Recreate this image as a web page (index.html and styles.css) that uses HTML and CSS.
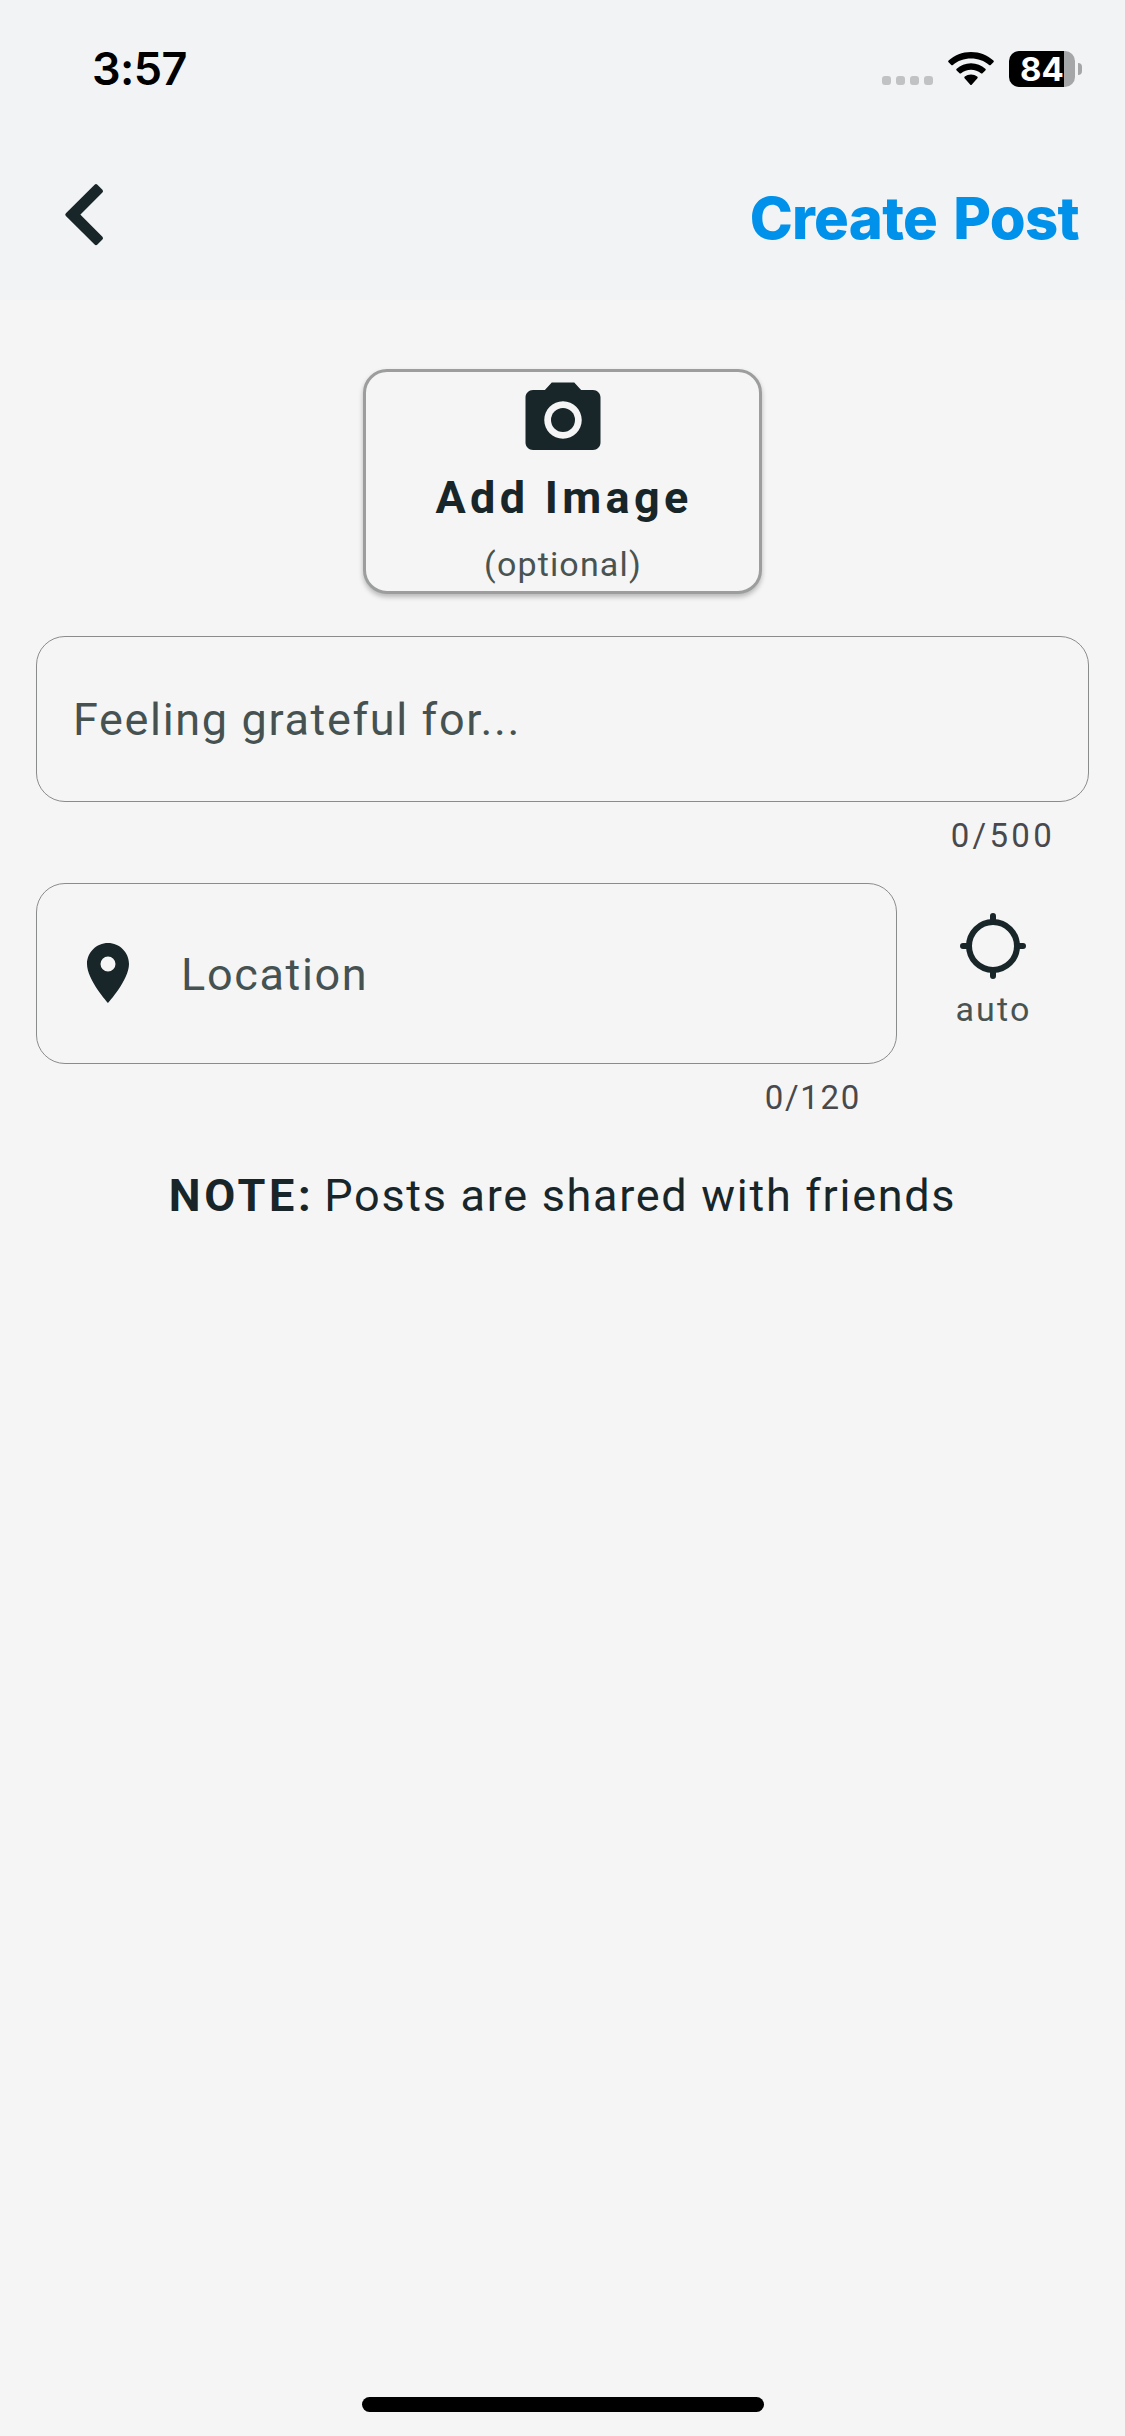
FILE: index.html
```html
<!DOCTYPE html>
<html lang="en">
<head>
<meta charset="utf-8">
<title>Create Post</title>
<link rel="stylesheet" href="styles.css">
</head>
<body>
<header class="header">
  <div class="status">
    <span class="time">3:57</span>
    <div class="indicators">
      <div class="signal"><i></i><i></i><i></i><i></i></div>
      <svg class="wifi" width="46" height="34" viewBox="0 0 46 34"><path d="M23 0C14.200 0 6.400 3.300.600 8.600a1.200 1.200 0 0 0 0 1.700l2.700 2.700a1.200 1.200 0 0 0 1.600 0C9.700 8.700 16 6.500 23 6.500s13.300 2.200 18.100 6.500a1.200 1.200 0 0 0 1.600 0l2.700-2.700a1.200 1.200 0 0 0 0-1.700C39.600 3.300 31.800 0 23 0zM23 11.300c-5.600 0-10.600 2.100-14.300 5.400a1.200 1.200 0 0 0 0 1.800l2.800 2.700a1.200 1.200 0 0 0 1.600 0c2.700-2.200 6.100-3.500 9.900-3.500s7.200 1.300 9.900 3.500a1.200 1.200 0 0 0 1.600 0l2.800-2.700a1.200 1.200 0 0 0 0-1.800C33.600 13.400 28.600 11.300 23 11.300zM23 22.500c-2.400 0-4.500.8-6.200 2.100a1.200 1.200 0 0 0 0 1.800l5.300 6.200a1.200 1.200 0 0 0 1.800 0l5.300-6.200a1.200 1.200 0 0 0 0-1.800c-1.700-1.300-3.800-2.100-6.200-2.100z"/></svg>
      <div class="battery"><span class="cell">84</span><span class="nub"></span></div>
    </div>
  </div>
  <nav class="nav">
    <svg class="back" width="40" height="64" viewBox="0 0 40 64"><path d="M3.300 31.700 32 3.200l5 5-23.400 23.500L37 55.200l-5 5z"/></svg>
    <h1 class="title">Create Post</h1>
  </nav>
</header>
<main class="form">
  <button class="add">
    <svg class="camera" viewBox="0 0 24 24"><circle cx="12" cy="12" r="3.2"/><path d="M9 2 7.170 4H4c-1.100 0-2 .9-2 2v12c0 1.100.9 2 2 2h16c1.100 0 2-.9 2-2V6c0-1.100-.9-2-2-2h-3.170L15 2H9zm3 15c-2.760 0-5-2.240-5-5s2.240-5 5-5 5 2.240 5 5-2.240 5-5 5z"/></svg>
    <span class="add-label">Add Image</span>
    <span class="add-hint">(optional)</span>
  </button>
  <div class="field message">Feeling grateful for...</div>
  <div class="count">0/500</div>
  <div class="row">
    <div class="place">
      <div class="field location">
        <svg class="pin" viewBox="0 0 24 24"><path d="M12 2C8.130 2 5 5.130 5 9c0 5.250 7 13 7 13s7-7.750 7-13c0-3.870-3.130-7-7-7zm0 9.500a2.500 2.500 0 1 1 0-5 2.500 2.500 0 0 1 0 5z"/></svg>
        <span>Location</span>
      </div>
      <div class="count place-count">0/120</div>
    </div>
    <div class="auto">
      <svg class="target" viewBox="0 0 66 66"><circle cx="33" cy="33" r="24"/><path d="M33 3v5M33 58v5M3 33h5M58 33h5"/></svg>
      <span>auto</span>
    </div>
  </div>
  <p class="note"><b>NOTE:</b> Posts are shared with friends</p>
</main>
<div class="home"></div>
</body>
</html>
```
FILE: styles.css
```css
* { box-sizing: border-box; }
body {
  margin: 0;
  height: 2436px;
  display: flex;
  flex-direction: column;
  background: #f5f5f5;
  color: #182629;
  font-family: Roboto, "Liberation Sans", sans-serif;
  font-size: 45px;
}
svg { display: block; fill: #182629; }
.header { height: 300px; flex-shrink: 0; background: #f1f3f5; }
.status {
  height: 137px;
  padding: 0 43px 0 92px;
  display: flex;
  justify-content: space-between;
  align-items: center;
  color: #000;
  font-family: Inter, "Liberation Sans", sans-serif;
}
.time { font-size: 45px; font-weight: 600; line-height: 54px; letter-spacing: -0.6px; }
.indicators { display: flex; align-items: center; }
.signal { display: flex; gap: 5px; margin: 24px 15px 0 0; }
.signal i { width: 9px; height: 9px; border-radius: 3px; background: #c0c2c4; }
.wifi { fill: #000; margin-right: 15px; }
.battery { display: flex; align-items: center; gap: 3px; }
.cell {
  width: 66px;
  height: 36px;
  border-radius: 10px;
  background: linear-gradient(to right, #000 55px, #a5a6a7 55px);
  color: #fff;
  font-size: 33px;
  font-weight: 700;
  line-height: 36px;
  text-align: center;
}
.nub { width: 4px; height: 12px; border-radius: 0 4px 4px 0; background: #a5a6a7; }
.nav {
  height: 163px;
  padding: 0 46px 0 64px;
  display: flex;
  justify-content: space-between;
}
.back { margin-top: 46px; stroke: #182629; stroke-width: 4; stroke-linejoin: round; }
.title {
  margin: 46px 0 0;
  font: 800 58px/70px Inter, "Liberation Sans", sans-serif;
  letter-spacing: -0.7px;
  word-spacing: 4px;
  color: #0091ea;
}
.form { flex: 1; padding: 69px 36px 0; }
.add {
  width: 399px;
  height: 225px;
  margin: 0 auto;
  padding: 3px 0 0;
  display: flex;
  flex-direction: column;
  align-items: center;
  border: 3px solid #9c9d9d;
  border-radius: 24px;
  background: #f5f5f5;
  box-shadow: 0 3px 5px rgba(0, 0, 0, 0.25);
  color: inherit;
  font: inherit;
}
.camera { width: 90px; height: 90px; }
.add-label { margin-top: 6px; padding-left: 3px; font-weight: 700; line-height: 54px; letter-spacing: 4.3px; }
.add-hint { margin-top: 19px; padding-left: 1px; font-size: 34px; line-height: 40px; letter-spacing: 1.15px; color: #485352; }
.field {
  border: 1px solid #8a8c8c;
  border-radius: 29px;
  display: flex;
  align-items: center;
  letter-spacing: 1.65px;
  color: #465251;
}
.message { height: 166px; margin-top: 42px; padding-left: 36px; }
.count {
  margin-top: 14px;
  padding-right: 34px;
  font-size: 33px;
  line-height: 40px;
  letter-spacing: 3.3px;
  text-align: right;
  color: #49494d;
}
.place-count { padding-right: 36px; letter-spacing: 1.7px; }
.row { display: flex; margin-top: 27px; }
.place { width: 861px; }
.location { height: 181px; padding: 1px 0 0 35px; gap: 37px; }
.pin { width: 72px; height: 72px; margin-top: -3px; }
.auto {
  flex: 1;
  padding-top: 30px;
  display: flex;
  flex-direction: column;
  align-items: center;
  font-size: 34px;
  line-height: 40px;
  letter-spacing: 2.2px;
  color: #485352;
}
.auto span { padding-left: 1px; }
.target { width: 66px; height: 66px; margin-bottom: 10px; fill: none; stroke: #182629; stroke-width: 6; stroke-linecap: round; }
.note { margin: 51px 0 0; text-align: center; line-height: 54px; letter-spacing: 1.7px; }
.note b { margin-right: -3px; letter-spacing: 3.7px; }
.home { width: 402px; height: 15px; margin: 0 auto 24px; border-radius: 8px; background: #000; }
```
